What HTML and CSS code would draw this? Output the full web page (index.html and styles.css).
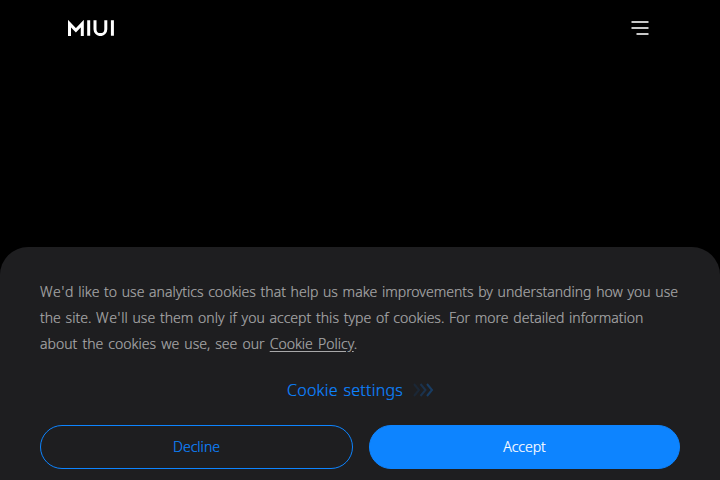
FILE: index.html
```html
<!DOCTYPE html>
<html lang="en">
<head>
<meta charset="utf-8">
<title>MIUI</title>
<link rel="stylesheet" href="styles.css">
</head>
<body>
<header class="header">
  <svg class="logo" width="46" height="16" viewBox="0 0 46 16" aria-label="MIUI" fill="none" stroke="#fff" stroke-width="3">
    <path d="M1.5 16V3.6L7.9 10.4L14.3 3.6V16" stroke-miterlimit="8"/>
    <path d="M20.7 .3V15.7M44.4 .3V15.7"/>
    <path d="M27 .3V9.2a5.4 5.4 0 0 0 10.8 0V.3"/>
  </svg>
  <button class="menu" aria-label="Menu">
    <svg width="18" height="14" viewBox="0 0 18 14" fill="none" stroke="#c8c8c8" stroke-width="2">
      <path d="M.5 1H17.5M.5 7H17.5M5.5 13H17.5"/>
    </svg>
  </button>
</header>
<section class="cookie">
  <p class="message">
    <span class="line line-1"><span class="contraction">We'</span>d like to use analytics cookies that help us make improvements by understanding how you use</span>
    <span class="line line-2">the site. <span class="contraction">We'</span>ll use them only if you accept this type of cookies. For more detailed information</span>
    <span class="line line-3">about the cookies we use, see our <a class="policy">Cookie Policy</a>.</span>
  </p>
  <a class="settings"><span class="settings-label">Cookie settings</span>
    <svg width="21" height="14" viewBox="0 0 21 14" fill="none" stroke="#0d84ff" stroke-width="2">
      <path opacity=".1" d="M1 1L6 7L1 13"/><path opacity=".2" d="M7.5 1L12.5 7L7.5 13"/><path opacity=".3" d="M14 1L19 7L14 13"/>
    </svg>
  </a>
  <div class="actions">
    <button class="button decline">Decline</button>
    <button class="button accept">Accept</button>
  </div>
</section>
</body>
</html>
```
FILE: styles.css
```css
* { box-sizing: border-box; }
body {
  margin: 0;
  height: 480px;
  overflow: hidden;
  display: flex;
  flex-direction: column;
  justify-content: space-between;
  background: #000;
  font-family: "Noto Sans", sans-serif;
  font-weight: 350;
  -webkit-text-stroke: .2px currentColor;
}
.header {
  display: flex;
  justify-content: space-between;
  align-items: center;
  height: 56px;
  padding: 0 71px 0 68px;
}
svg { display: block; }
.menu { padding: 0; border: 0; background: none; }
.cookie {
  height: 233px;
  padding: 32px 40px 0;
  background: #1e1e20;
  border-radius: 28px 28px 0 0;
}
.message {
  margin: 0;
  color: #a8a8a9;
  font-size: 14px;
  line-height: 26px;
}
.line { display: block; white-space: nowrap; }
.line-1 { word-spacing: 1.05px; }
.line-2 { word-spacing: 1.13px; }
.line-3 { word-spacing: 1.5px; }
.contraction { letter-spacing: .8px; }
.policy { text-decoration: underline; text-underline-offset: 2px; }
.settings {
  display: flex;
  align-items: center;
  height: 26px;
  margin: 20px 0 22px 247px;
  gap: 10px;
  color: #0d84ff;
  font-size: 16px;
  white-space: nowrap;
}
.settings-label { letter-spacing: .25px; word-spacing: 1.3px; }
.actions { display: grid; grid-template-columns: 313px 311px; gap: 16px; }
.button {
  height: 44px;
  padding: 0 0 2px;
  border: 1px solid #0d84ff;
  border-radius: 22px;
  font: inherit;
  font-size: 14px;
}
.decline { background: none; color: #0d84ff; }
.accept { background: #0d84ff; color: #fff; }
```
